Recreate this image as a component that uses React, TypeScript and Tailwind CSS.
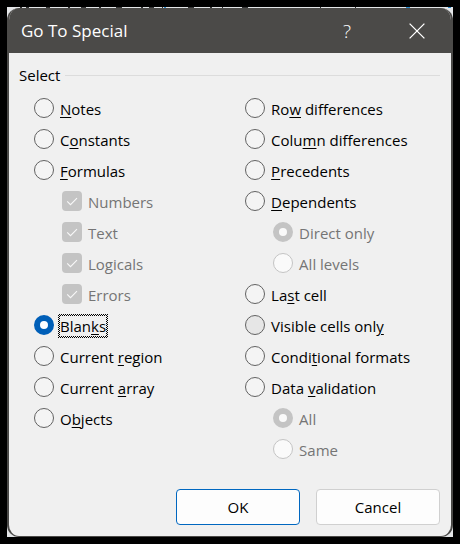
import type { ReactNode } from 'react';
import { clsx } from 'clsx';

type Option = {
  id: string;
  label: ReactNode;
  type?: 'radio' | 'checkbox';
  group?: string;
  sub?: boolean;
  checked?: boolean;
  disabled?: boolean;
  focused?: boolean;
  hovered?: boolean;
};

const leftOptions: Option[] = [
  { id: 'notes', label: <><u>N</u>otes</> },
  { id: 'constants', label: <>C<u>o</u>nstants</> },
  { id: 'formulas', label: <><u>F</u>ormulas</> },
  { id: 'numbers', label: 'Numbers', type: 'checkbox', sub: true, checked: true, disabled: true },
  { id: 'text', label: 'Text', type: 'checkbox', sub: true, checked: true, disabled: true },
  { id: 'logicals', label: 'Logicals', type: 'checkbox', sub: true, checked: true, disabled: true },
  { id: 'errors', label: 'Errors', type: 'checkbox', sub: true, checked: true, disabled: true },
  { id: 'blanks', label: <>Blan<u>k</u>s</>, checked: true, focused: true },
  { id: 'current-region', label: <>Current <u>r</u>egion</> },
  { id: 'current-array', label: <>Current <u>a</u>rray</> },
  { id: 'objects', label: <>O<u>b</u>jects</> },
];

const rightOptions: Option[] = [
  { id: 'row-differences', label: <>Ro<u>w</u> differences</> },
  { id: 'column-differences', label: <>Colu<u>m</u>n differences</> },
  { id: 'precedents', label: <><u>P</u>recedents</> },
  { id: 'dependents', label: <><u>D</u>ependents</> },
  { id: 'direct-only', label: 'Direct only', group: 'depth', sub: true, checked: true, disabled: true },
  { id: 'all-levels', label: 'All levels', group: 'depth', sub: true, disabled: true },
  { id: 'last-cell', label: <>La<u>s</u>t cell</> },
  { id: 'visible-cells', label: <>Visible cells onl<u>y</u></>, hovered: true },
  { id: 'conditional-formats', label: <>Condi<u>t</u>ional formats</> },
  { id: 'data-validation', label: <>Data <u>v</u>alidation</> },
  { id: 'validation-all', label: 'All', group: 'validation', sub: true, checked: true, disabled: true },
  { id: 'validation-same', label: 'Same', group: 'validation', sub: true, disabled: true },
];

function OptionRow({ option }: { option: Option }) {
  const { id, label, type = 'radio', group = 'select', sub, checked, disabled, focused, hovered } = option;

  return (
    <div className={clsx('flex h-[31px] items-start gap-1', sub && 'pl-7')}>
      {type === 'checkbox' ? (
        <span className="mt-[5px] grid size-5 shrink-0 place-items-center">
          <input
            id={id}
            type="checkbox"
            defaultChecked={checked}
            disabled={disabled}
            className="col-start-1 row-start-1 size-5 appearance-none rounded-[4px] bg-[#c4c4c4]"
          />
          <svg viewBox="0 0 20 20" className="pointer-events-none col-start-1 row-start-1 size-5" fill="none">
            <path d="M5.2 10.4 L8.5 13.7 L15 7.2" stroke="#f8f8f8" strokeWidth="1.1" />
          </svg>
        </span>
      ) : (
        <input
          id={id}
          type="radio"
          name={group}
          defaultChecked={checked}
          disabled={disabled}
          className={clsx(
            'mt-[5px] size-5 shrink-0 appearance-none rounded-full border border-[#626262] checked:border-[6px] checked:border-[#005fb8] checked:bg-white disabled:border-[#c4c4c4] disabled:bg-[#fafafa]',
            hovered ? 'bg-[#e6e6e6]' : 'bg-[#f4f4f4]',
          )}
        />
      )}
      <label
        htmlFor={id}
        className={clsx(
          'mt-1 p-0.5 whitespace-nowrap [&_u]:underline-offset-2',
          // checkered focus ring
          focused && 'bg-[conic-gradient(#000_25%,#f0f0f0_0_50%,#000_0_75%,#f0f0f0_0)] bg-size-[2px_2px]',
          disabled ? 'text-[#757575]' : 'text-black',
        )}
      >
        <span className="block bg-[#f0f0f0] leading-5">{label}</span>
      </label>
    </div>
  );
}

// sliver of the worksheet that shows above the title bar
function SheetEdge() {
  return (
    <svg viewBox="0 0 446 1" preserveAspectRatio="none" className="block h-px w-full" aria-hidden="true">
      <path
        d="M13 .5h2M19 .5h3M39 .5h4M61 .5h2M74 .5h5M92 .5h2M109 .5h6M134 .5h2M142 .5h5M155 .5h1M181 .5h6M203 .5h2M215 .5h1M235 .5h6M313 .5h1M348 .5h1"
        stroke="#333"
      />
      <path d="M157 .5h2M399 .5h4M441 .5h3" stroke="#2b8ccf" />
    </svg>
  );
}

export default function App() {
  return (
    <main className="min-h-screen bg-black p-[7px] font-['Open_Sans','Noto_Sans',sans-serif] text-[15px]">
      <div className="bg-[#e4e6e8]">
        <SheetEdge />
        <div
          role="dialog"
          aria-labelledby="dialog-title"
          className="overflow-hidden rounded-[12px] border-x-2 border-b border-[#4b4a48] bg-[#f0f0f0]"
        >
          <header className="flex h-[45px] items-center justify-between bg-[#4b4a48] pr-5 pl-3 text-white">
            <h1 id="dialog-title" className="text-[17px]">
              Go To Special
            </h1>
            <div className="flex items-center gap-10">
              <button type="button" aria-label="Help" className="w-8 text-[19px] leading-5 font-light">
                ?
              </button>
              <button type="button" aria-label="Close" className="flex size-7 items-center justify-center">
                <svg viewBox="0 0 16 16" className="size-4" fill="none" stroke="#fff" strokeWidth="1.3">
                  <path d="M.6.6 15.4 15.4M15.4.6.6 15.4" />
                </svg>
              </button>
            </div>
          </header>

          <form className="pt-[10px] pr-[11px] pb-[11px] pl-[10px]">
            <fieldset>
              <legend className="flex h-6 w-full items-center gap-[5px]">
                Select
                <span className="h-px flex-1 bg-[#dcdcdc]" />
              </legend>
              <div className="grid grid-cols-[13fr_12fr] pt-[6px] pl-[15px]">
                <div>
                  {leftOptions.map((option) => (
                    <OptionRow key={option.id} option={option} />
                  ))}
                </div>
                <div>
                  {rightOptions.map((option) => (
                    <OptionRow key={option.id} option={option} />
                  ))}
                </div>
              </div>
            </fieldset>

            <div className="mt-6 flex justify-end gap-4">
              <button type="button" className="h-9 w-[124px] rounded-[4px] border border-[#0067c0] bg-[#fdfdfd]">
                OK
              </button>
              <button type="button" className="h-9 w-[124px] rounded-[4px] border border-[#d0d0d0] bg-[#fdfdfd]">
                Cancel
              </button>
            </div>
          </form>
        </div>
      </div>
    </main>
  );
}
